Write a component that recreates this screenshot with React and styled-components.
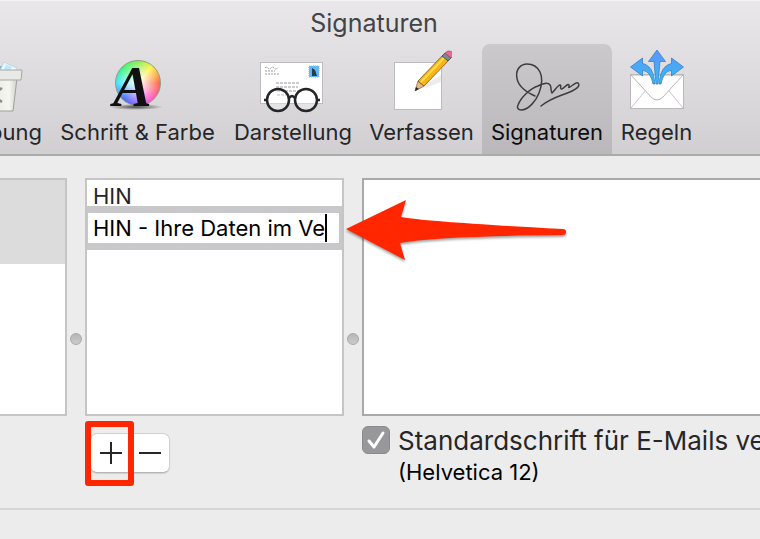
import React, { useState } from "react";
import styled, { createGlobalStyle } from "styled-components";

const GlobalStyle = createGlobalStyle`
  *, *::before, *::after { box-sizing: border-box; }
  body {
    margin: 0;
    background: #ececec;
    color: #262628;
    font-family: Inter, "Liberation Sans", sans-serif;
    font-size: 22px;
    overflow: hidden;
  }
  button, input { font: inherit; color: inherit; }
`;

const Window = styled.div`
  display: flex;
  flex-direction: column;
  min-height: 100vh;
  overflow: hidden;
`;

const Header = styled.header`
  display: flex;
  flex-direction: column;
  background: linear-gradient(#e9e7e9, #d1cfd1);
  border-top: 1px solid #f5f4f5;
  border-bottom: 2px solid #acabac;
`;

const Title = styled.h1`
  margin: 0;
  padding-right: 12px;
  height: 43px;
  line-height: 44px;
  text-align: center;
  font-size: 25px;
  font-weight: 400;
  color: #444345;
`;

const Toolbar = styled.nav`
  display: flex;
  margin-left: -61px;
`;

const Tab = styled.button`
  flex: none;
  display: flex;
  flex-direction: column;
  align-items: center;
  width: ${(p) => p.$width}px;
  height: 110px;
  padding: 0;
  border: 0;
  border-radius: 8px 8px 0 0;
  background: ${(p) => (p.$active ? "linear-gradient(#cbc9cb, #bab8ba)" : "transparent")};
  color: ${(p) => (p.$active ? "#0c0c0d" : "#262628")};
  line-height: 28px;
  white-space: nowrap;

  svg { display: block; margin-bottom: 2px; }
`;

const Panes = styled.main`
  display: flex;
  height: 238px;
  margin-top: 22px;
`;

const AccountList = styled.section`
  flex: none;
  width: 67px;
  background: #fff;
  border: 2px solid #c5c5c5;
  border-left: 0;
`;

const AccountSelection = styled.div`
  height: 84px;
  background: #dcdcdc;
`;

const Splitter = styled.div`
  flex: none;
  display: flex;
  align-items: flex-end;
  justify-content: center;
  width: 18px;
  padding-bottom: 71px;
`;

const Grip = styled.span`
  width: 12px;
  height: 12px;
  border: 1px solid #aaa;
  border-radius: 50%;
  background: linear-gradient(#b6b6b6, #cbcbcb);
`;

const SignatureList = styled.ul`
  flex: none;
  width: 259px;
  margin: 0;
  padding: 0;
  list-style: none;
  background: #fff;
  border: 2px solid #c5c5c5;
`;

const SignatureRow = styled.li`
  height: 26px;
  padding-left: 6px;
  line-height: 32px;
`;

const EditingRow = styled.li`
  padding: 7px 3px 7px 1px;
  background: #c8c8cb;
`;

const EditField = styled.div`
  display: flex;
  align-items: center;
  height: 30px;
  padding-left: 5px;
  background: #fff;
  color: #000;
`;

const NameInput = styled.input`
  field-sizing: content;
  max-width: 240px;
  height: 30px;
  padding: 0;
  border: 0;
  outline: 0;
  background: transparent;
  caret-color: transparent;
`;

const Caret = styled.span`
  width: 2px;
  height: 28px;
  background: #000;
`;

const Preview = styled.section`
  position: relative;
  flex: 1;
  background: #fff;
  border: 2px solid #a9a9a9;
  border-right: 0;
`;

const Arrow = styled.svg`
  position: absolute;
  top: 15px;
  left: -22px;
  filter: drop-shadow(0 2px 1px rgba(0, 0, 0, 0.35));
`;

const Controls = styled.div`
  display: flex;
  align-items: flex-start;
  height: 94px;
  padding-left: 90px;
  border-bottom: 2px solid #d5d5d5;
`;

const ButtonPair = styled.div`
  flex: none;
  position: relative;
  display: flex;
  width: 80px;
  height: 40px;
  margin: 17px 192px 0 0;
  background: #fff;
  border: 1px solid #d0d0d0;
  border-bottom-color: #b5b5b5;
  border-radius: 7px;
  box-shadow: 0 1px 1px #d2d2d2;
`;

const SmallButton = styled.button`
  flex: 1;
  display: grid;
  place-items: center;
  padding: 0;
  border: 0;
  background: transparent;
`;

const Highlight = styled.span`
  position: absolute;
  top: -13px;
  left: -6px;
  width: 49px;
  height: 65px;
  border: 6px solid #ff2600;
  border-radius: 3px;
  pointer-events: none;
`;

const FontOption = styled.div`
  display: grid;
  grid-template-columns: 28px auto;
  column-gap: 8px;
  padding-top: 10px;
  white-space: nowrap;
`;

const CheckBox = styled.input`
  appearance: none;
  width: 28px;
  height: 28px;
  margin: 0;
  border: 1px solid #8b8a8f;
  border-radius: 6px;
  background: #98979c;
  grid-area: 1 / 1;
`;

const CheckMark = styled.svg`
  grid-area: 1 / 1;
  pointer-events: none;
`;

const OptionLabel = styled.label`
  grid-column: 2;
  grid-row: 1;
  line-height: 30px;
  font-size: 26px;
`;

const FontName = styled.span`
  grid-column: 2;
  line-height: 32px;
  color: #000;
`;

function BinIcon() {
  return (
    <svg width="60" height="72" viewBox="-4 0 60 72" aria-hidden="true">
      <defs>
        <linearGradient id="bin" x1="0" x2="1">
          <stop offset="0" stopColor="#dfe0d9" />
          <stop offset=".8" stopColor="#f5f6f0" />
          <stop offset="1" stopColor="#d0d1ca" />
        </linearGradient>
      </defs>
      <path d="M8 26 17 17 30 23 40 22 46 29H8Z" fill="#7cc4ef" stroke="#569ecb" />
      <path d="m35 18 13 6-3 5H30Z" fill="#eefaff" stroke="#bfd4df" />
      <path d="m37 20 6 3-3 5h-6z" fill="#c0e7fa" />
      <path d="M9 34h39l-4 33H13Z" fill="url(#bin)" stroke="#9da19b" />
      <path d="M7 26h46l-1 10H5Z" fill="#e8ebe5" stroke="#a4a9a1" />
      <path d="m33 44-10 7 10 7" fill="none" stroke="#8b8d8a" strokeWidth="2.500" />
    </svg>
  );
}

const ColourWheel = styled.span`
  display: grid;
  place-items: center;
  width: 60px;
  height: 72px;
  margin-bottom: 2px;
`;

const Wheel = styled.span`
  grid-area: 1 / 1;
  width: 46px;
  height: 46px;
  margin-top: 6px;
  border: 1px solid #8e9c88;
  border-radius: 50%;
  background:
    radial-gradient(circle, #fff 0%, rgba(255, 255, 255, 0.7) 25%, transparent 72%),
    conic-gradient(#83ec4d, #fff23a 40deg, #ff623c 90deg, #ff50ce 145deg, #9a58ff 180deg, #3d65ff 220deg, #38e6ff 270deg, #33f573 315deg, #83ec4d);
`;

const WheelLetter = styled.svg`
  grid-area: 1 / 1;
  overflow: visible;
  && { margin: 0; }
`;

function FontsIcon() {
  return (
    <ColourWheel aria-hidden="true">
      <Wheel />
      <WheelLetter width="60" height="72" viewBox="0 0 60 72">
        <defs>
          <radialGradient id="shade"><stop stopColor="#000" stopOpacity=".65" /><stop offset="1" stopColor="#000" stopOpacity="0" /></radialGradient>
        </defs>
        <ellipse cx="28" cy="63" rx="27" ry="3" fill="url(#shade)" />
        <text x="5" y="62" fontFamily="Liberation Serif, serif" fontStyle="italic" fontWeight="700" fontSize="58" fill="#101010">A</text>
      </WheelLetter>
    </ColourWheel>
  );
}

function ViewIcon() {
  return (
    <svg width="66" height="72" viewBox="1 0 66 72" aria-hidden="true">
      <rect x="1.500" y="18.500" width="62" height="41" fill="#fff" stroke="#bcbcbe" />
      <g fill="none" stroke="#999" strokeWidth="1">
        <path d="M6 24q2-2 3 0t3 0 3 0 4 0M6 27h10M6 30h14" strokeDasharray="2 1" />
        <path d="M17 39h24M17 43h22M18 47h22M18 51h9" strokeDasharray="3 1" />
      </g>
      <rect x="50" y="22" width="10" height="11" fill="#5bb9f5" stroke="#8dbde0" strokeDasharray="1 1" />
      <path d="m53 24 3 2 2 6h-5z" fill="#263b4d" />
      <g fill="#fff" fillOpacity=".35" stroke="#242528" strokeWidth="2.500">
        <circle cx="19" cy="56" r="11" />
        <circle cx="47" cy="56" r="11" />
        <path d="M30 54q3-4 6 0M5 56h4m49 0h3" fill="none" />
      </g>
    </svg>
  );
}

function ComposeIcon() {
  return (
    <svg width="60" height="72" viewBox="0 0 60 72" aria-hidden="true">
      <rect x="2.500" y="18.500" width="47" height="47" fill="#fff" stroke="#bcbcbe" />
      <path d="M24 46 49 31v7q-12 5-25 8" fill="#ececec" />
      <path d="m23 47 3-10 6 5Z" fill="#e5bb7e" stroke="#7c6047" strokeWidth=".7" />
      <path d="m23 47 1-4 3 2Z" fill="#262626" />
      <path d="m26 37 25-26 6 5-25 26Z" fill="#f8b414" stroke="#75511e" strokeWidth=".8" />
      <path d="m29 38 24-25" stroke="#ffdc45" strokeWidth="2" />
      <path d="m50 12 3-3 6 5-3 3Z" fill="#7b8791" stroke="#3a4650" strokeWidth=".8" />
      <path d="m53 9 3-2q6 0 5 5l-2 2Z" fill="#e66a91" stroke="#a54b66" strokeWidth=".8" />
    </svg>
  );
}

function SignatureIcon() {
  return (
    <svg width="70" height="72" viewBox="0 0 70 72" fill="none" stroke="#3d3c3e" strokeWidth="1.500" strokeLinecap="round" strokeLinejoin="round" aria-hidden="true">
      <path d="M23 52C14 48 5 41 4.700 32C4 25 9 20 15 20C22 20 26 24 28 28C31 34 30 41 27 49C24 57 17 65 10 66C5 66 5 63 6 61C9 53 19 44 26 42C30 40 36 38 38 41C40 43 38 46 40 49C43 46 46 41 48 41C50 41 47 45 50 45C53 43 56 39 57 41C58 43 55 44 58 43C61 41 64 38 66 39C69 42 64 45 60 47C52 51 40 53 29 62" />
    </svg>
  );
}

function RulesIcon() {
  return (
    <svg width="60" height="72" viewBox="0 0 60 72" aria-hidden="true">
      <defs>
        <linearGradient id="blue" gradientUnits="userSpaceOnUse" x1="0" y1="6" x2="0" y2="40">
          <stop stopColor="#6094fb" /><stop offset="1" stopColor="#35bdf0" />
        </linearGradient>
      </defs>
      <rect x="3.500" y="30.500" width="53" height="34" fill="#fff" stroke="#b9b9bb" />
      <path d="m4 64 14-17m38 17L42 47" stroke="#c7c7c9" />
      <path d="m4 31 20 22q6 6 12 0l20-22Z" fill="#fff" stroke="#b6b6b8" />
      <g fill="url(#blue)" stroke="#2f74c4" strokeWidth=".7">
        <path d="m30 6 8.500 11.500H33L31 40h-2l-2-22.500h-5.500Z" />
        <path d="M3.500 23 15.500 14v5.500C23 21 27 28 28 40h-2C24 31 21 27 15.500 26.500V32Z" />
        <path d="M56.500 23 44.500 14v5.500C37 21 33 28 32 40h2C36 31 39 27 44.500 26.500V32Z" />
      </g>
    </svg>
  );
}

const tabs = [
  { label: "Werbung", width: 111, Icon: BinIcon },
  { label: "Schrift & Farbe", width: 175, Icon: FontsIcon },
  { label: "Darstellung", width: 136, Icon: ViewIcon },
  { label: "Verfassen", width: 121, Icon: ComposeIcon },
  { label: "Signaturen", width: 130, Icon: SignatureIcon },
  { label: "Regeln", width: 89, Icon: RulesIcon },
];

export default function App() {
  const [active, setActive] = useState("Signaturen");
  const [name, setName] = useState("HIN - Ihre Daten im Ve");

  return (
    <Window>
      <GlobalStyle />
      <Header>
        <Title>Signaturen</Title>
        <Toolbar>
          {tabs.map(({ label, width, Icon }) => (
            <Tab key={label} $width={width} $active={label === active} onClick={() => setActive(label)}>
              <Icon />
              {label}
            </Tab>
          ))}
        </Toolbar>
      </Header>
      <Panes>
        <AccountList><AccountSelection /></AccountList>
        <Splitter><Grip /></Splitter>
        <SignatureList>
          <SignatureRow>HIN</SignatureRow>
          <EditingRow>
            <EditField>
              <NameInput aria-label="Name der Signatur" value={name} onChange={(e) => setName(e.target.value)} />
              <Caret />
            </EditField>
          </EditingRow>
        </SignatureList>
        <Splitter><Grip /></Splitter>
        <Preview>
          <Arrow width="230" height="76" viewBox="0 0 230 76" aria-hidden="true">
            <path d="M4 34 64 5l-5 17q28 5 162 12a3 3 0 0 1 0 6Q94 41 58 48l5 17Z" fill="#ff2600" />
          </Arrow>
        </Preview>
      </Panes>
      <Controls>
        <ButtonPair>
          <SmallButton aria-label="Signatur hinzufügen">
            <svg width="22" height="22" viewBox="0 0 22 22" stroke="#262626" strokeWidth="2"><path d="M0 11h22M11 0v22" /></svg>
          </SmallButton>
          <SmallButton aria-label="Signatur entfernen">
            <svg width="22" height="22" viewBox="0 0 22 22" stroke="#262626" strokeWidth="2"><path d="M0 11h22" /></svg>
          </SmallButton>
          <Highlight />
        </ButtonPair>
        <FontOption>
          <CheckBox type="checkbox" id="default-font" defaultChecked />
          <CheckMark width="28" height="28" viewBox="0 0 28 28" fill="none" stroke="#fff" strokeWidth="3" strokeLinecap="round" strokeLinejoin="round" aria-hidden="true">
            <path d="m7 15 5 6 9-14" />
          </CheckMark>
          <OptionLabel htmlFor="default-font">Standardschrift für E-Mails verwenden</OptionLabel>
          <FontName>(Helvetica 12)</FontName>
        </FontOption>
      </Controls>
    </Window>
  );
}
